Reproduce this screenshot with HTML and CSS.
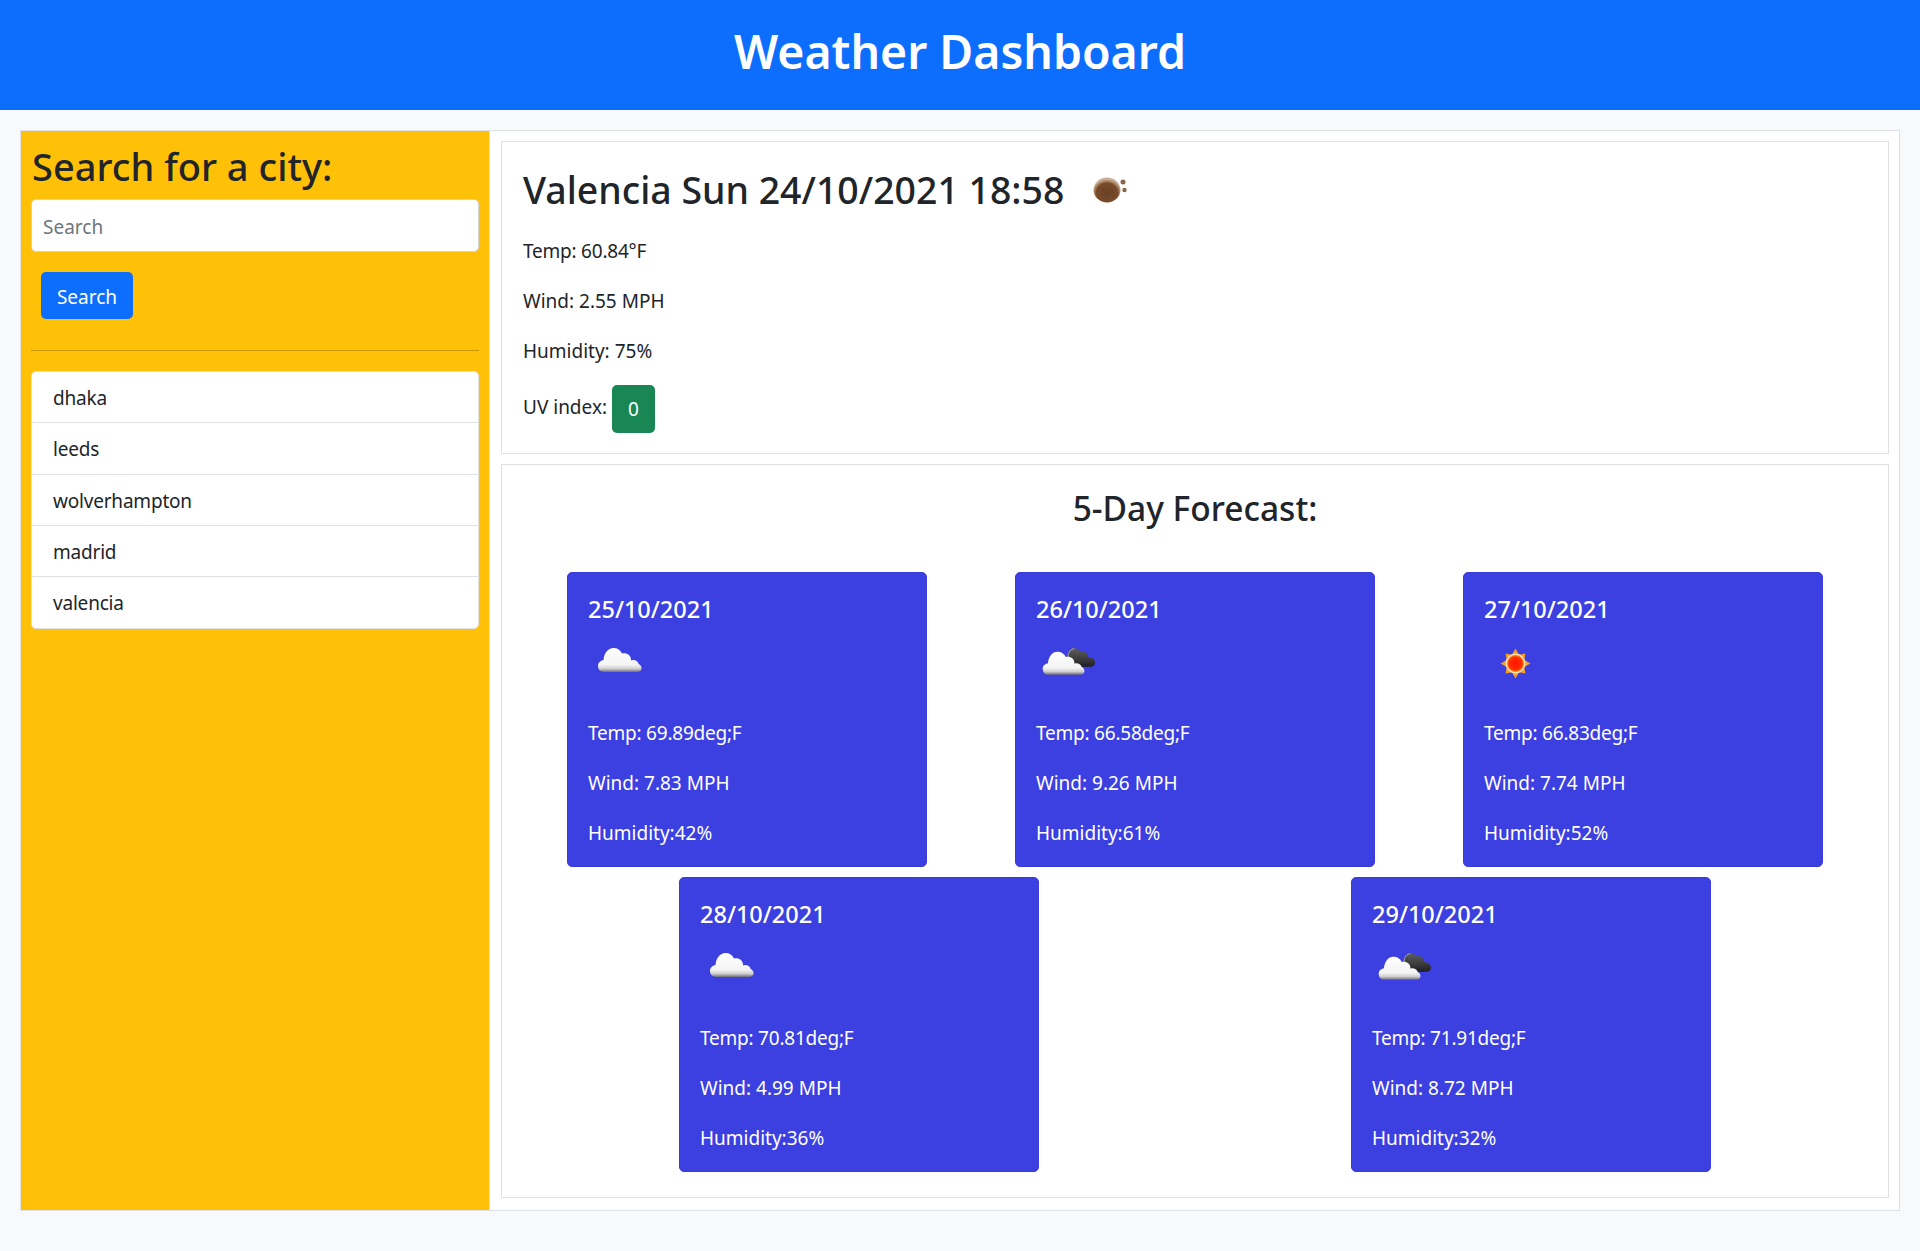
FILE: index.html
```html
<!DOCTYPE html>
<html lang="en">
<head>
<meta charset="utf-8">
<title>Weather Dashboard</title>
<link rel="stylesheet" href="styles.css">
</head>
<body>
<svg class="defs" aria-hidden="true">
  <defs>
    <linearGradient id="white-grad" x1="0" y1="0" x2="0" y2="1">
      <stop offset="0" stop-color="#ffffff"/>
      <stop offset=".7" stop-color="#f4f4f4"/>
      <stop offset=".86" stop-color="#d0d0d2"/>
      <stop offset="1" stop-color="#6e6e76"/>
    </linearGradient>
    <linearGradient id="dark-grad" x1="0" y1="0" x2="0" y2="1">
      <stop offset="0" stop-color="#5c5c5c"/>
      <stop offset=".6" stop-color="#3a3a3a"/>
      <stop offset="1" stop-color="#1c1c22"/>
    </linearGradient>
    <radialGradient id="sun-grad" cx=".5" cy=".5" r=".5">
      <stop offset="0" stop-color="#ff1500"/>
      <stop offset=".72" stop-color="#ff2a00"/>
      <stop offset="1" stop-color="#ff8a10"/>
    </radialGradient>
    <radialGradient id="moon-grad" cx=".5" cy=".62" r=".55">
      <stop offset="0" stop-color="#6a4125"/>
      <stop offset=".72" stop-color="#774a2a"/>
      <stop offset=".86" stop-color="#a98262"/>
      <stop offset="1" stop-color="#c9ad96"/>
    </radialGradient>
    <path id="cloud-shape" d="M16 39C12 39 10 36 10 33C10 29.500 12.500 27.500 15.500 27C16 20 20 15 25.500 15C29.500 15 32.500 17 34 20.500C36 19.800 39 20 41 22C42.500 23.500 43 25 43.200 27.500C44.500 26.500 47 27 48.500 28C50 29 50.500 30 50.500 31C52 31.500 53.500 33 53.500 35C53.500 37.500 52 39 49 39Z"/>
    <symbol id="cloud-white" viewBox="0 0 62.5 62.5">
      <use class="soft" href="#cloud-shape" fill="url(#white-grad)"/>
    </symbol>
    <symbol id="cloud-few" viewBox="0 0 62.5 62.500">
      <path class="soft" fill="url(#dark-grad)" d="M34 34L32 24C32 19 34.500 15.300 38 15.300C41 15.300 43 16.500 44 18.500C46 17.700 49 18 50.500 20C51.500 21 52 22.500 52 24C55 24 59 26 59 29.500C59 32.500 56.500 33.700 54 33.700Z"/>
      <path class="rim" d="M32 24C32.200 19 34.800 15.800 38.300 15.800"/>
      <use class="soft" href="#cloud-shape" fill="url(#white-grad)" transform="translate(-2.900 4.300) scale(.96)"/>
    </symbol>
    <symbol id="sun" viewBox="0 0 62.500 62.500">
      <polygon class="soft" fill="#f9a020" points="31.500,15.500 35.100,21.700 41.400,20.600 40.300,26.900 46.500,30.500 40.300,34.100 41.400,40.400 35.100,39.300 31.500,45.500 27.900,39.300 21.600,40.400 22.700,34.100 16.500,30.500 22.700,26.900 21.600,20.600 27.900,21.700"/>
      <circle cx="31.500" cy="30.500" r="10" fill="#fbe3b0"/>
      <circle cx="31.500" cy="30.500" r="8.500" fill="url(#sun-grad)"/>
    </symbol>
    <symbol id="moon" viewBox="0 0 62.500 62.500">
      <ellipse class="soft" cx="31" cy="31" rx="13.500" ry="12.500" fill="url(#moon-grad)"/>
      <circle class="soft" cx="47" cy="23" r="2.500" fill="#8a6648"/>
      <circle class="soft" cx="48.500" cy="31" r="2.200" fill="#8a6648"/>
    </symbol>
  </defs>
</svg>

<header class="site-header">
  <h1 class="site-title">Weather Dashboard</h1>
</header>

<main class="layout">
  <aside class="sidebar">
    <h2 class="sidebar-title">Search for a city:</h2>
    <form class="search-form">
      <input class="search-input" type="text" placeholder="Search">
      <button class="search-button" type="button">Search</button>
    </form>
    <hr class="divider">
    <ul class="city-list">
      <li class="city-item">dhaka</li>
      <li class="city-item">leeds</li>
      <li class="city-item">wolverhampton</li>
      <li class="city-item">madrid</li>
      <li class="city-item">valencia</li>
    </ul>
  </aside>

  <section class="content">
    <article class="panel today">
      <h2 class="today-title">Valencia Sun 24/10/2021 18:58 <svg class="icon today-icon"><use href="#moon"/></svg></h2>
      <p class="stat temp">Temp: 60.84°F</p>
      <p class="stat">Wind: 2.55 MPH</p>
      <p class="stat">Humidity: 75%</p>
      <p class="uv"><span class="uv-label">UV index:</span> <span class="uv-badge">0</span></p>
    </article>

    <article class="panel forecast">
      <h3 class="forecast-title">5-Day Forecast:</h3>
      <div class="forecast-row">
        <div class="day-card">
          <h4 class="day-date">25/10/2021</h4>
          <svg class="icon day-icon"><use href="#cloud-white"/></svg>
          <p class="stat temp">Temp: 69.89deg;F</p>
          <p class="stat">Wind: 7.83 MPH</p>
          <p class="stat last">Humidity:42%</p>
        </div>
        <div class="day-card">
          <h4 class="day-date">26/10/2021</h4>
          <svg class="icon day-icon"><use href="#cloud-few"/></svg>
          <p class="stat temp">Temp: 66.58deg;F</p>
          <p class="stat">Wind: 9.26 MPH</p>
          <p class="stat last">Humidity:61%</p>
        </div>
        <div class="day-card">
          <h4 class="day-date">27/10/2021</h4>
          <svg class="icon day-icon"><use href="#sun"/></svg>
          <p class="stat temp">Temp: 66.83deg;F</p>
          <p class="stat">Wind: 7.74 MPH</p>
          <p class="stat last">Humidity:52%</p>
        </div>
      </div>
      <div class="forecast-row">
        <div class="day-card">
          <h4 class="day-date">28/10/2021</h4>
          <svg class="icon day-icon"><use href="#cloud-white"/></svg>
          <p class="stat temp">Temp: 70.81deg;F</p>
          <p class="stat">Wind: 4.99 MPH</p>
          <p class="stat last">Humidity:36%</p>
        </div>
        <div class="day-card">
          <h4 class="day-date">29/10/2021</h4>
          <svg class="icon day-icon"><use href="#cloud-few"/></svg>
          <p class="stat temp">Temp: 71.91deg;F</p>
          <p class="stat">Wind: 8.72 MPH</p>
          <p class="stat last">Humidity:32%</p>
        </div>
      </div>
    </article>
  </section>
</main>
</body>
</html>
```

FILE: styles.css
```css
* {
  box-sizing: border-box;
}

html,
body {
  margin: 0;
  min-height: 1251px;
}

body {
  background: #f8f9fa;
  color: #212529;
  font-family: "Noto Sans", "Open Sans", sans-serif;
  font-size: 19px;
  line-height: 30px;
}

.defs {
  position: absolute;
  width: 0;
  height: 0;
}

.soft {
  filter: blur(.4px);
}

.rim {
  fill: none;
  stroke: #a9a9a0;
  stroke-width: 1;
}

.site-header {
  height: 110px;
  background: #0d6efd;
  color: #fff;
  display: flex;
  align-items: center;
  justify-content: center;
  padding-bottom: 9px;
}

.site-title {
  margin: 0;
  font-size: 46.400px;
  font-weight: 600;
  line-height: 60px;
}

.layout {
  display: flex;
  margin: 20px 20px 0;
  height: 1081px;
  background: #fff;
  border: 1px solid #dee2e6;
}

.sidebar {
  width: 469px;
  flex: none;
  background: #ffc107;
  padding: 10px;
  border-right: 1px solid #dee2e6;
}

.sidebar-title {
  margin: 1px 0 9px 1px;
  font-size: 38px;
  font-weight: 500;
  line-height: 48px;
}

.search-input {
  display: block;
  width: 100%;
  height: 52.500px;
  padding: 3px 11px 0;
  border: 1px solid #ced4da;
  border-radius: 5px;
  background: #fff;
  font: inherit;
  color: #212529;
}

.search-input::placeholder {
  color: #6c757d;
  opacity: 1;
}

.search-button {
  display: block;
  margin: 20.500px 0 0 10px;
  width: 92px;
  height: 47px;
  padding: 2px 0 0;
  border: 0;
  border-radius: 5px;
  background: #0d6efd;
  color: #fff;
  font: inherit;
}

.divider {
  margin: 31px 0 20px;
  border: 0;
  border-top: 1px solid #c89800;
}

.city-list {
  margin: 0;
  padding: 0;
  list-style: none;
  background: #fff;
  border: 1px solid #dee2e6;
  border-radius: 5px;
}

.city-item {
  height: 51.250px;
  padding: 11px 20px 9px 21px;
  border-bottom: 1px solid #dee2e6;
  letter-spacing: -.2px;
}

.city-item:last-child {
  border-bottom: 0;
}

.content {
  flex: 1;
  min-width: 0;
  display: flex;
  flex-direction: column;
  gap: 10px;
  padding: 10px 10px 10px 11px;
}

.panel {
  background: #fff;
  border: 1px solid #dee2e6;
  padding: 20px;
}

.today {
  padding-left: 21px;
}

.today-title {
  display: flex;
  align-items: center;
  height: 64px;
  margin: 0 0 10px;
  padding-bottom: 8px;
  gap: 2px;
  font-size: 37.450px;
  font-weight: 500;
  line-height: 48px;
  white-space: pre;
}

.icon {
  display: block;
  flex: none;
  width: 62.500px;
  height: 62.500px;
}

.stat {
  margin: 0 0 20px;
}

.stat.temp {
  letter-spacing: -.22px;
}

.stat.last {
  margin-bottom: 0;
}

.uv {
  margin: -1px 0 0;
  display: flex;
  align-items: flex-start;
  gap: 5px;
}

.uv-label {
  margin-top: 7px;
}

.uv-badge {
  width: 43px;
  height: 48px;
  border-radius: 5px;
  background: #198754;
  color: #fff;
  display: flex;
  align-items: center;
  justify-content: center;
}

.forecast {
  padding: 22px 20px 15px;
}

.forecast-title {
  margin: 0 0 43px;
  font-size: 33.500px;
  font-weight: 500;
  line-height: 42px;
  text-align: center;
}

.forecast-row {
  display: flex;
  justify-content: space-around;
  margin: 0 1px 10px;
}

.day-card {
  width: 360px;
  height: 295px;
  padding: 21px 20px 20px;
  background: #3c40e0;
  border: 1px solid #393cd6;
  border-radius: 5px;
  color: #fff;
}

.day-date {
  margin: 0 0 9px;
  font-size: 23.500px;
  font-weight: 500;
  line-height: 30px;
}

.day-icon {
  margin-bottom: 22px;
}
```
